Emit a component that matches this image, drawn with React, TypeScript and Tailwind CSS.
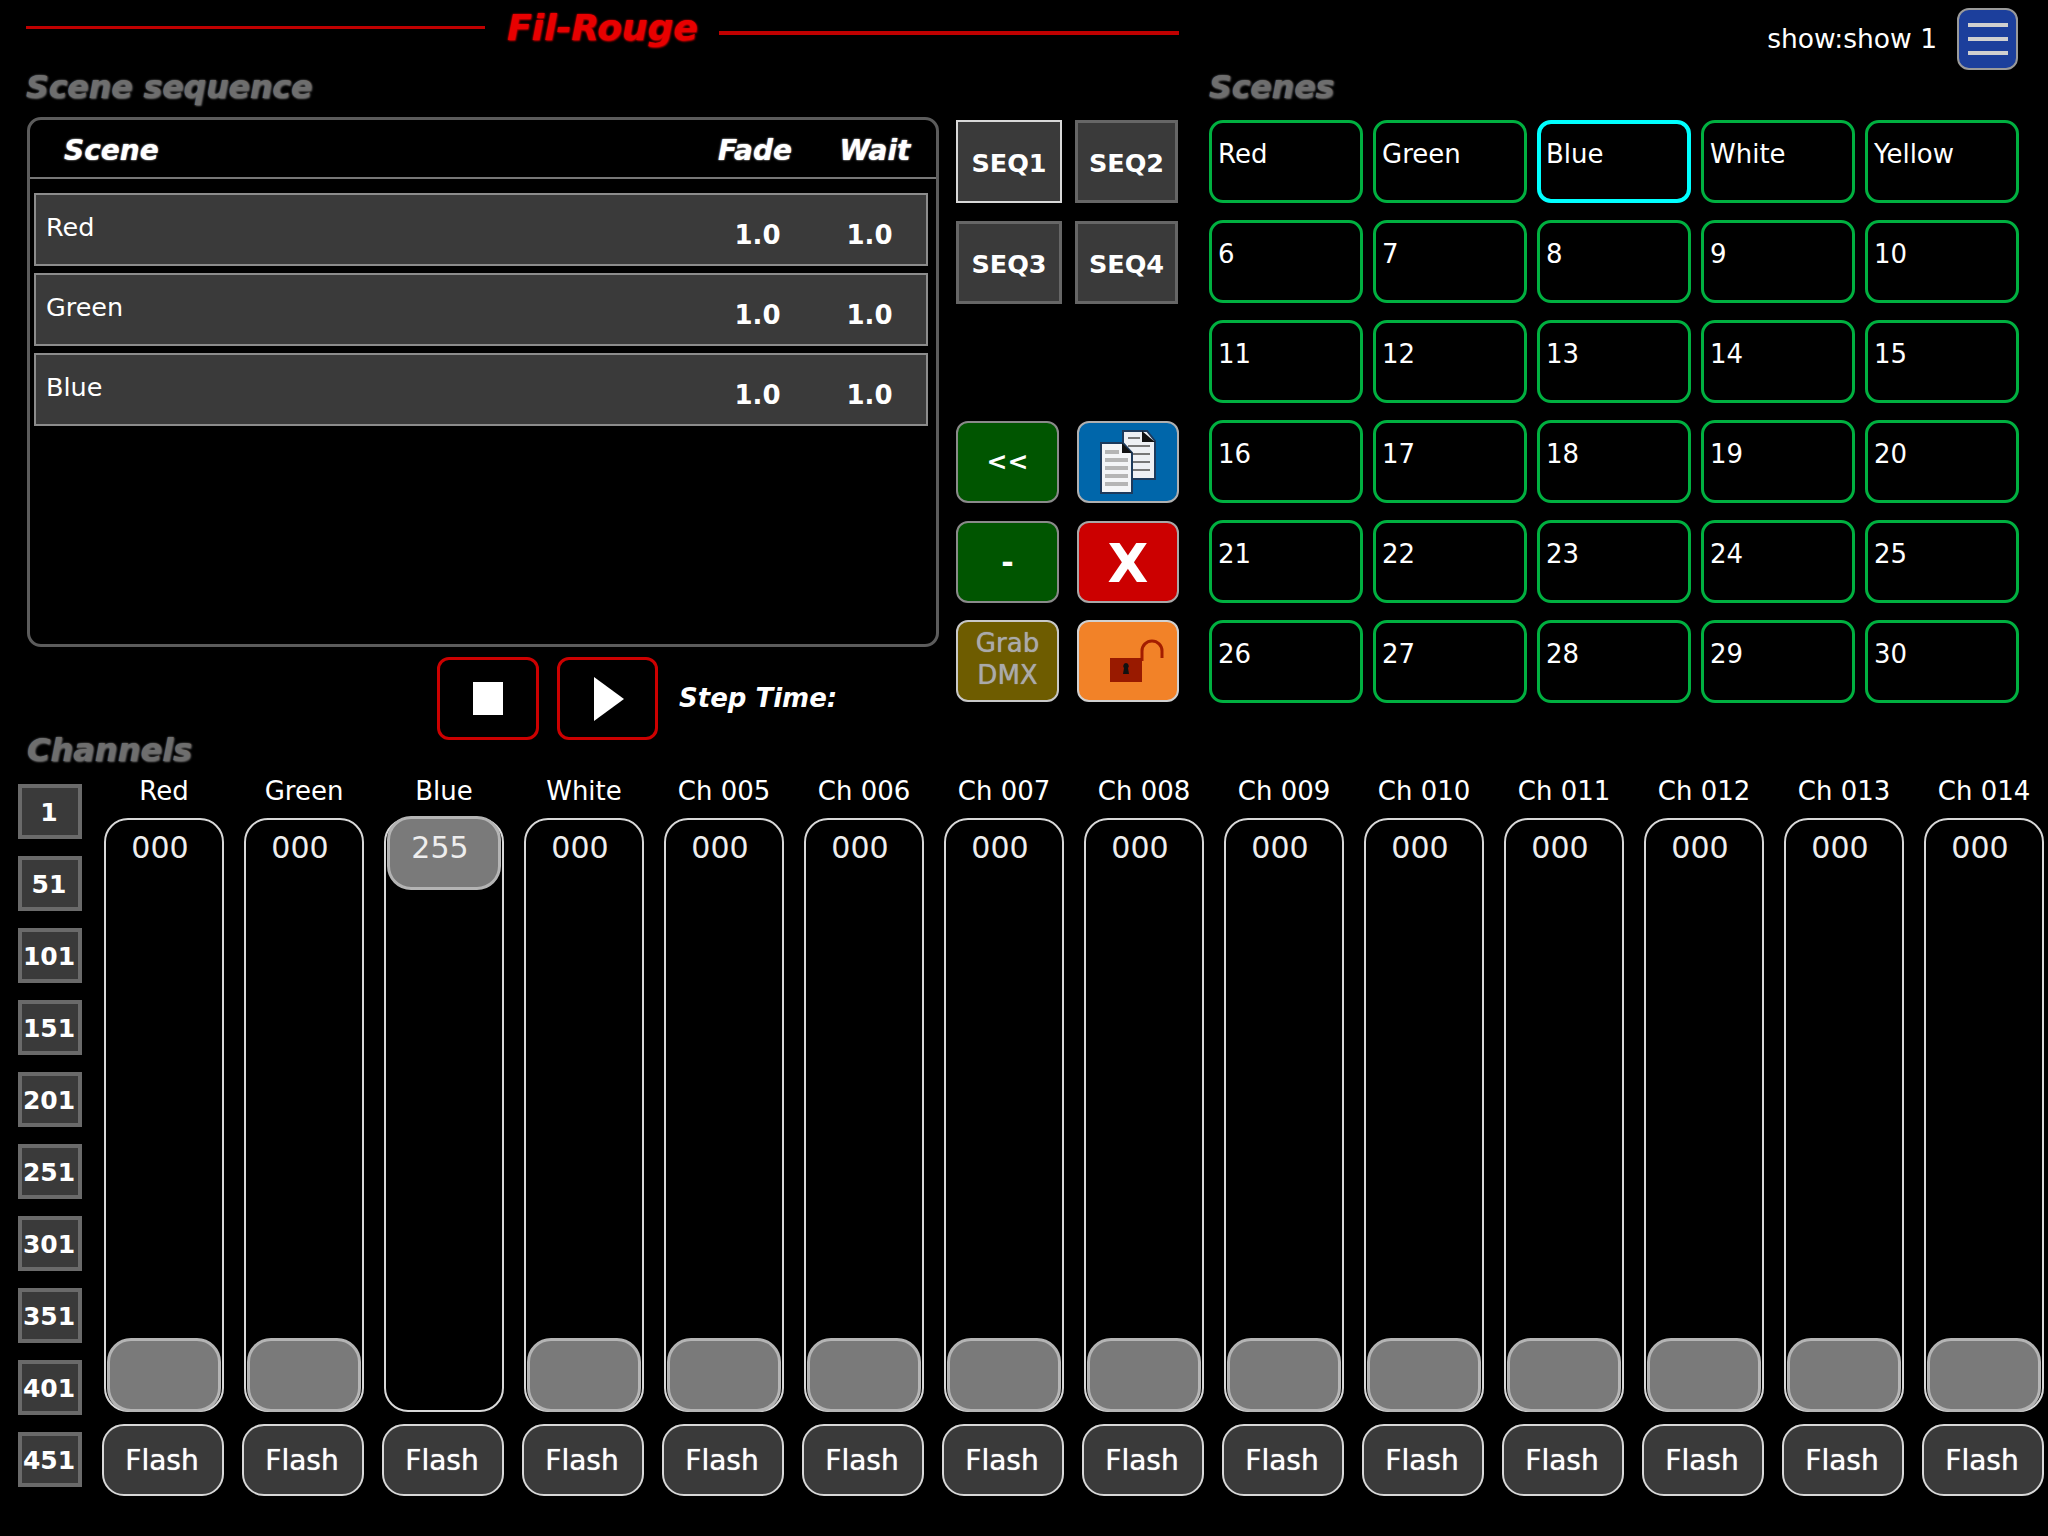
const seqRows = ["Red", "Green", "Blue"];
const sceneNames = ["Red", "Green", "Blue", "White", "Yellow"];
const scenes = Array.from({ length: 30 }, (_, i) => sceneNames[i] ?? String(i + 1));
const pages = [1, 51, 101, 151, 201, 251, 301, 351, 401, 451];
const channels = [
    "Red", "Green", "Blue", "White", "Ch 005", "Ch 006", "Ch 007",
    "Ch 008", "Ch 009", "Ch 010", "Ch 011", "Ch 012", "Ch 013", "Ch 014",
];

function SectionTitle({ children }: { children: string }) {
    return (
        <h2 className="h-[45px] text-[31.5px] leading-[30px] font-bold italic text-[#6e6e6e] [text-shadow:1px_1px_2px_#666,0_0_2px_#777]">
            {children}
        </h2>
    );
}

function CopyIcon() {
    return (
        <svg width="56" height="64" viewBox="0 0 56 64">
            <path d="M23 1h24l8 10v38H23z" fill="#eef0f4" stroke="#1d3a5c" strokeWidth="2" />
            <path d="M42 1l13 11H42z" fill="#111" />
            <path d="M28 8h12M28 16h22M28 24h22M28 32h22M28 40h22" stroke="#777" strokeWidth="2" />
            <path d="M1 13h22l9 10v40H1z" fill="#f4f5f7" stroke="#1d3a5c" strokeWidth="2" />
            <path d="M22 13l10 10H22z" fill="#111" />
            <path d="M5 22h14M5 30h23M5 38h23M5 46h23M5 54h23" stroke="#b5b5b5" strokeWidth="4" />
        </svg>
    );
}

function LockIcon() {
    return (
        <svg width="54" height="44" viewBox="0 0 54 44">
            <path d="M32 22V12a10 10 0 0 1 20 0v7" fill="none" stroke="#a31d00" strokeWidth="3" />
            <rect x="0" y="19" width="32" height="24" fill="#991a00" />
            <path d="M16 24a3 3 0 0 1 2 5l1 6h-6l1-6a3 3 0 0 1 2-5z" fill="#111" />
        </svg>
    );
}

function Fader({ name, value }: { name: string; value: number }) {
    const full = value === 255;
    return (
        <div className="flex w-[140px] shrink-0 flex-col items-start">
            <div className="ml-[2px] mb-[11px] mt-[1px] h-[32px] w-[120px] text-center text-[26px] leading-[32px] text-white">{name}</div>
            <div className={`relative ml-[2px] flex h-[594px] w-[120px] flex-col rounded-[24px] border-2 border-[#d8d8d8] ${full ? "justify-start" : "justify-end"}`}>
                <div className={`mx-px h-[74px] rounded-[24px] border-[3px] border-[#b4b4b4] bg-[#7a7a7a] ${full ? "-mt-[4px]" : "-mb-[2px]"}`} />
                <div className="absolute inset-x-0 top-[10px] pr-[8px] text-center text-[30px] leading-[36px] text-[#eeeeee]">
                    {String(value).padStart(3, "0")}
                </div>
            </div>
            <button className="mt-[12px] h-[72px] w-[122px] rounded-[22px] border-2 border-[#d8d8d8] bg-[#3a3a3a] pr-[2px] pt-px text-[28px] text-white [text-shadow:0_0_1px_#ffffff]">
                Flash
            </button>
        </div>
    );
}

export default function App() {
    return (
        <div className="flex h-[1536px] w-[2048px] flex-col overflow-hidden bg-black font-['DejaVu_Sans',sans-serif]">
            {/* Header */}
            <header className="flex h-[72px] shrink-0 items-start pl-[26px]">
                <div className="mt-[26px] h-[3px] w-[459px] bg-[#c00000]" />
                <div className="ml-[22px] mt-[6px] text-[36px] leading-[44px] font-bold italic text-[#e80000] [text-shadow:1px_1px_2px_#c00000,0_0_2px_#e00000]">
                    Fil-Rouge
                </div>
                <div className="ml-[21px] mt-[31px] h-[4px] w-[460px] bg-[#c00000]" />
                <div className="ml-auto mt-[23px] text-[26.5px] leading-[32px] text-white">show:show 1</div>
                <button className="ml-[20px] mr-[30px] mt-[8px] flex h-[62px] w-[61px] flex-col items-center justify-center gap-[10px] rounded-[12px] border-2 border-[#9a9a9a] bg-[#1c3f9c]">
                    <span className="h-[4px] w-[40px] bg-[#d0d0d0]" />
                    <span className="h-[4px] w-[40px] bg-[#d0d0d0]" />
                    <span className="h-[4px] w-[40px] bg-[#d0d0d0]" />
                </button>
            </header>

            <div className="flex h-[667px] shrink-0">
                {/* Scene sequence */}
                <section className="ml-[26px] w-[913px] shrink-0">
                    <SectionTitle>Scene sequence</SectionTitle>
                    <div className="ml-px h-[530px] rounded-[14px] border-[3px] border-[#5c5c5c] pl-[4px] pr-[8px]">
                        <div className="-ml-[4px] -mr-[8px] grid h-[59px] grid-cols-[1fr_120px_120px_1px] items-center border-b-2 border-[#777777] pt-[5px] text-center text-[28px] font-bold italic text-white [text-shadow:0_0_2px_#ffffff]">
                            <div className="pl-[34px] text-left">Scene</div>
                            <div>Fade</div>
                            <div>Wait</div>
                        </div>
                        <div className="mt-[14px] flex flex-col gap-[7px]">
                            {seqRows.map((row) => (
                                <div key={row} className="grid h-[73px] grid-cols-[1fr_112px_112px] items-center border-2 border-[#8c8c8c] bg-[#3a3a3a] text-center text-white">
                                    <div className="pb-[5px] pl-[10px] text-left text-[25.5px]">{row}</div>
                                    <div className="pr-px pt-[12px] text-[26px] font-bold">1.0</div>
                                    <div className="pr-px pt-[12px] text-[26px] font-bold">1.0</div>
                                </div>
                            ))}
                        </div>
                    </div>
                    <div className="mt-[10px] flex items-center pl-[411px]">
                        <button className="flex h-[83px] w-[102px] items-center justify-center rounded-[12px] border-[3px] border-[#cc0000]">
                            <span className="h-[33px] w-[30px] bg-white" />
                        </button>
                        <button className="ml-[18px] flex h-[83px] w-[101px] items-center justify-center rounded-[12px] border-[3px] border-[#cc0000] pl-[2px]">
                            <svg width="30" height="44" viewBox="0 0 30 44"><path d="M0 0l30 22L0 44z" fill="#ffffff" /></svg>
                        </button>
                        <div className="ml-[21px] text-[26px] font-bold italic text-white">Step Time:</div>
                    </div>
                </section>

                {/* Sequence and action buttons */}
                <section className="ml-[17px] w-[222px] shrink-0 pt-[48px]">
                    <div className="grid grid-cols-[106px_103px] gap-x-[13px] gap-y-[18px] text-[25.5px] font-bold text-white">
                        <button className="h-[83px] border-2 border-[#d8d8d8] bg-[#3a3a3a] pt-[3px]">SEQ1</button>
                        <button className="h-[83px] border-[3px] border-[#666666] bg-[#3a3a3a] pt-[3px]">SEQ2</button>
                        <button className="h-[83px] border-[3px] border-[#666666] bg-[#3a3a3a] pt-[3px]">SEQ3</button>
                        <button className="h-[83px] border-[3px] border-[#666666] bg-[#3a3a3a] pt-[3px]">SEQ4</button>
                    </div>
                    <div className="mt-[117px] grid grid-cols-[103px_102px] gap-x-[18px] gap-y-[17.5px] text-white">
                        <button className="h-[82px] rounded-[12px] border-2 border-[#8a8a8a] bg-[#005500] text-[25px] font-bold">&lt;&lt;</button>
                        <button className="flex h-[82px] items-center justify-center rounded-[12px] border-2 border-[#b0b0b0] bg-[#0066aa]"><CopyIcon /></button>
                        <button className="h-[82px] rounded-[12px] border-2 border-[#8a8a8a] bg-[#005500] pt-[2px] text-[30px] font-bold">-</button>
                        <button className="h-[82px] rounded-[12px] border-2 border-[#a8a8a8] bg-[#cc0000] pt-[3px] text-[53px] leading-none font-bold">X</button>
                        <button className="h-[82px] rounded-[12px] border-2 border-[#c8c8c8] bg-[#6e5c00] pb-[5px] text-[26px] leading-[32px] text-[#aaaaaa] [text-shadow:0_0_1px_#aaaaaa]">Grab<br />DMX</button>
                        <button className="flex h-[82px] items-center justify-center rounded-[12px] border-2 border-[#d0d0d0] bg-[#f28228] pl-[18px]"><LockIcon /></button>
                    </div>
                </section>

                {/* Scenes */}
                <section className="ml-[31px] shrink-0">
                    <SectionTitle>Scenes</SectionTitle>
                    <div className="mt-[3px] grid grid-cols-[repeat(5,154px)] gap-x-[10px] gap-y-[17px]">
                        {scenes.map((scene) => (
                            <button
                                key={scene}
                                className={`flex h-[83px] items-start rounded-[14px] text-left text-[26px] leading-[30px] text-white ${scene === "Blue" ? "border-4 border-[#00ffff] pl-[5px] pt-[15px]" : "border-[3px] border-[#00b040] pl-[6px] pt-[16px]"}`}
                            >
                                {scene}
                            </button>
                        ))}
                    </div>
                </section>
            </div>

            {/* Channels */}
            <h2 className="-mt-[4px] mb-[9px] h-[30px] pl-[27px] text-[32px] leading-[30px] font-bold italic text-[#6e6e6e] [text-shadow:1px_1px_2px_#666,0_0_2px_#777]">
                Channels
            </h2>
            <div className="flex pl-[18px]">
                <div className="flex w-[84px] shrink-0 flex-col gap-[17px] pt-[10px]">
                    {pages.map((page) => (
                        <button key={page} className="h-[55px] w-[64px] border-4 border-[#6a6a6a] bg-[#3a3a3a] pr-[2px] pt-[2px] text-[25px] font-bold text-white">
                            {page}
                        </button>
                    ))}
                </div>
                {channels.map((name) => (
                    <Fader key={name} name={name} value={name === "Blue" ? 255 : 0} />
                ))}
            </div>
        </div>
    );
}
